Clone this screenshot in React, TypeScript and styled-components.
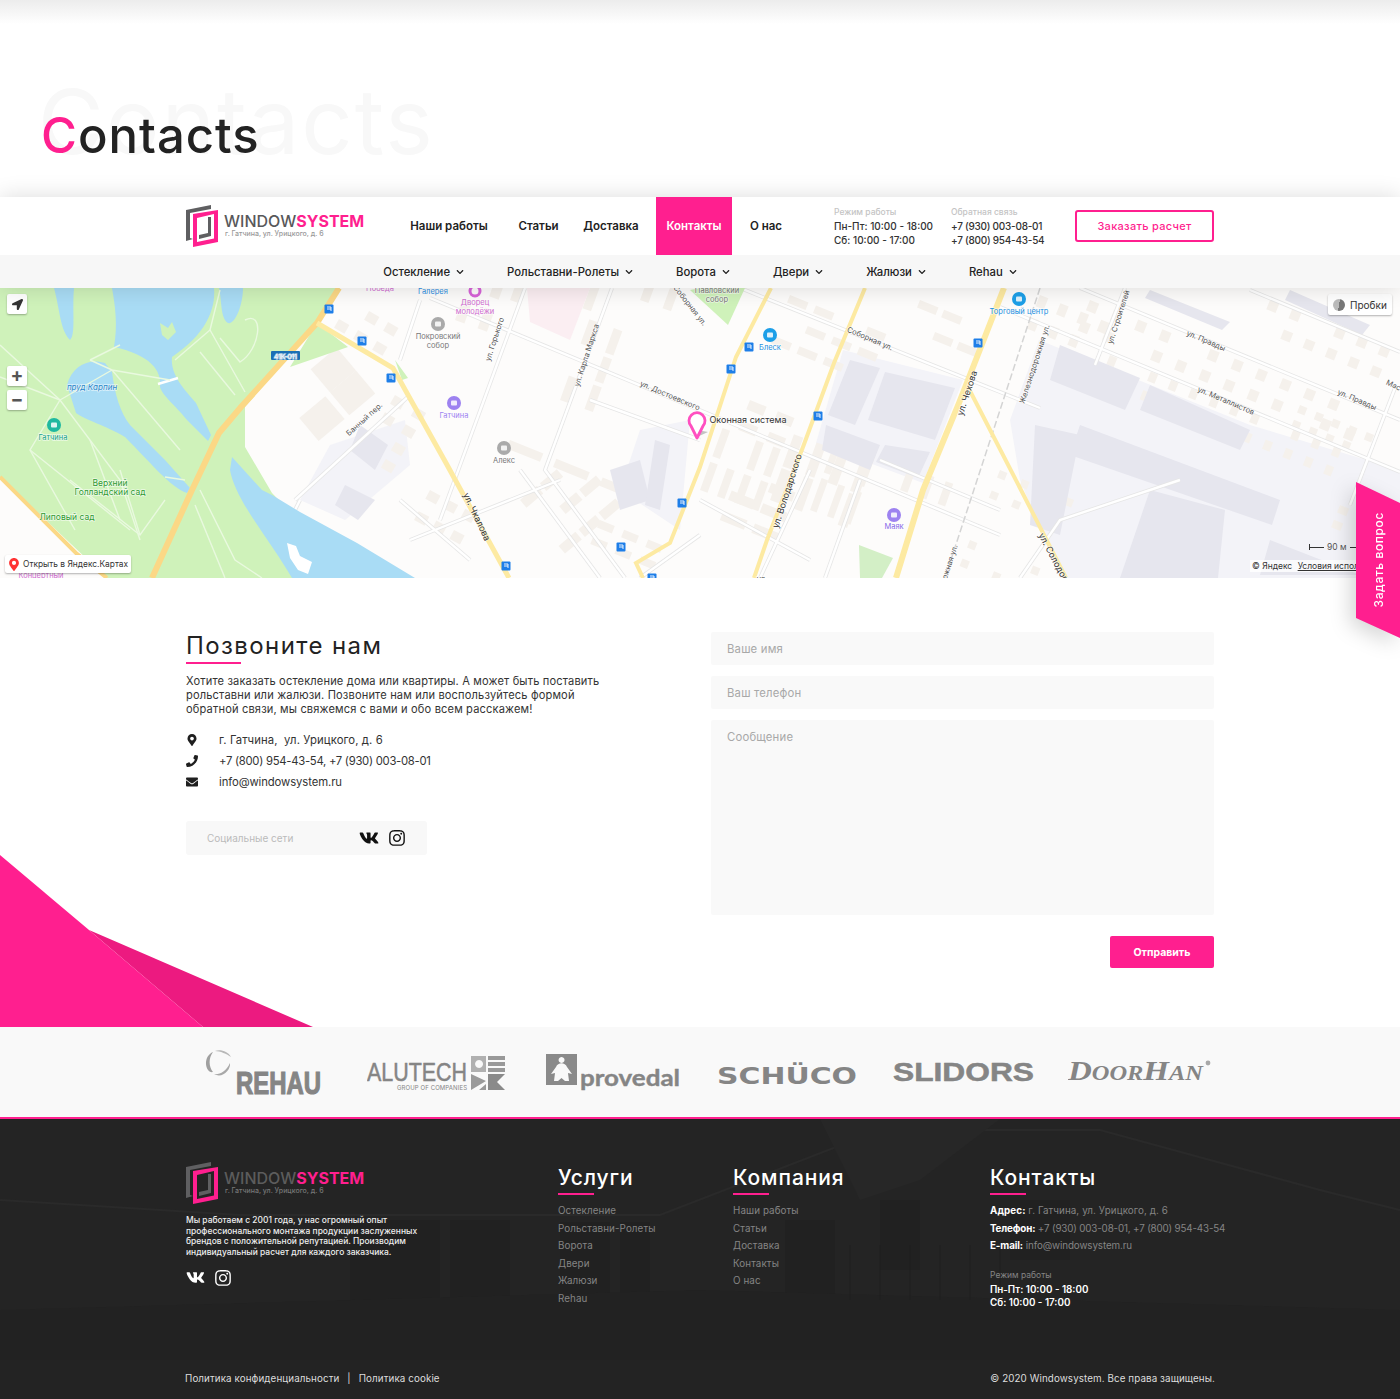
import React from 'react';
import styled, { createGlobalStyle } from 'styled-components';
import { FaVk, FaInstagram, FaMapMarkerAlt, FaPhoneAlt, FaEnvelope, FaChevronDown, FaLocationArrow } from 'react-icons/fa';

const pink = '#ff1f8f';
const font = '"Inter", "Noto Sans", sans-serif';

const Global = createGlobalStyle`
    html, body { margin: 0; padding: 0; background: #fff; }
    body { font-family: ${font}; color: #222; }
    * { box-sizing: border-box; }
`;

const Page = styled.div`
    position: relative;
    width: 1400px;
    height: 1399px;
    overflow: hidden;
`;

/* ---------- hero ---------- */
const Hero = styled.section`
    position: relative;
    height: 197px;
    padding: 106px 0 0 41px;
    background: linear-gradient(#ececec, #fff 24px);
`;
const GhostTitle = styled.div`
    position: absolute;
    left: 38px;
    top: 72px;
    font-size: 90px;
    line-height: 100px;
    letter-spacing: 2px;
    color: #f8f8f8;
`;
const Title = styled.h1`
    position: relative;
    margin: 0;
    font-size: 49px;
    line-height: 60px;
    font-weight: 500;
    letter-spacing: 1px;
    color: #222;
    span { color: ${pink}; }
`;

/* ---------- header ---------- */
const Header = styled.header`
    position: relative;
    z-index: 2;
    box-shadow: 0 0 22px rgba(0, 0, 0, .14);
`;
const TopBar = styled.div`
    height: 58px;
    background: #fff;
    padding-left: 185px;
    display: flex;
    align-items: stretch;
`;
const LogoBox = styled.div<{ $w: number }>`
    display: flex;
    align-items: center;
    gap: 4px;
    width: ${p => p.$w}px;
`;
const LogoText = styled.div`
    display: flex;
    flex-direction: column;
    margin-top: -2px;
`;
const LogoName = styled.div<{ $dark?: boolean }>`
    font-size: 16px;
    line-height: 18px;
    font-weight: 500;
    white-space: nowrap;
    color: ${p => (p.$dark ? '#5c5c5c' : '#58585a')};
    b { font-weight: 700; color: ${pink}; }
`;
const LogoSub = styled.div<{ $dark?: boolean }>`
    font-size: 7px;
    line-height: 8px;
    margin-left: 1px;
    font-weight: 500;
    white-space: nowrap;
    color: ${p => (p.$dark ? '#777' : '#999')};
`;
const NavItem = styled.a<{ $w: number; $ml?: number; $active?: boolean }>`
    width: ${p => p.$w}px;
    margin-left: ${p => p.$ml ?? 0}px;
    display: flex;
    align-items: center;
    justify-content: center;
    font-size: 11.5px;
    font-weight: 600;
    white-space: nowrap;
    color: ${p => (p.$active ? '#fff' : '#222')};
    background: ${p => (p.$active ? pink : 'transparent')};
`;
const InfoCol = styled.div<{ $w: number; $ml?: number; $ls?: number }>`
    width: ${p => p.$w}px;
    margin-left: ${p => p.$ml ?? 0}px;
    padding-top: 10px;
    font-size: 10px;
    line-height: 13.5px;
    font-weight: 500;
    letter-spacing: ${p => p.$ls ?? 0}px;
    white-space: nowrap;
    color: #333;
`;
const InfoHint = styled.div`
    font-size: 8.5px;
    line-height: 10px;
    margin-bottom: 3px;
    letter-spacing: 0;
    color: #c4c4c4;
`;
const OrderButton = styled.a`
    width: 139px;
    height: 32px;
    margin-top: 13px;
    display: flex;
    align-items: center;
    justify-content: center;
    border: 2px solid ${pink};
    border-radius: 3px;
    font-size: 11px;
    font-weight: 500;
    letter-spacing: .3px;
    color: ${pink};
`;
const SubBar = styled.nav`
    height: 33px;
    background: #f7f7f7;
    display: flex;
    align-items: center;
    justify-content: center;
    gap: 43px;
    font-size: 11.3px;
    font-weight: 500;
    color: #222;
`;
const SubItem = styled.a`
    display: flex;
    align-items: center;
    gap: 6px;
    white-space: nowrap;
    svg { width: 8px; height: 8px; }
`;

/* ---------- map ---------- */
const MapWrap = styled.section`
    position: relative;
    height: 290px;
    overflow: hidden;
    background: #fdfcfb;
    svg.map { display: block; }
`;
const MapText = styled.text<{ $c?: string; $s?: number; $i?: boolean }>`
    font-family: ${font};
    font-size: ${p => p.$s ?? 8}px;
    font-style: ${p => (p.$i ? 'italic' : 'normal')};
    fill: ${p => p.$c ?? '#555'};
    text-anchor: middle;
    paint-order: stroke;
    stroke: rgba(255, 255, 255, .6);
    stroke-width: 1.5px;
`;
const MapButton = styled.div<{ $top: number }>`
    position: absolute;
    left: 7px;
    top: ${p => p.$top}px;
    width: 20px;
    height: 20px;
    background: #fff;
    border-radius: 2px;
    box-shadow: 0 1px 2px rgba(0, 0, 0, .3);
    display: flex;
    align-items: center;
    justify-content: center;
    font-size: 19px;
    font-weight: 700;
    line-height: 20px;
    color: #555;
    svg { width: 11px; height: 11px; color: #333; }
`;
const TrafficButton = styled.div`
    position: absolute;
    right: 8px;
    top: 6px;
    width: 64px;
    height: 21px;
    padding-left: 5px;
    background: #fff;
    border-radius: 2px;
    box-shadow: 0 1px 2px rgba(0, 0, 0, .3);
    display: flex;
    align-items: center;
    gap: 5px;
    font-size: 10px;
    color: #333;
    i { width: 12px; height: 12px; border-radius: 50%; background: linear-gradient(100deg, #bbb 50%, #777 50%); }
`;
const OpenMaps = styled.div`
    position: absolute;
    left: 5px;
    top: 267px;
    width: 126px;
    height: 18px;
    padding-left: 3px;
    background: #fff;
    border-radius: 2px;
    box-shadow: 0 1px 2px rgba(0, 0, 0, .3);
    display: flex;
    align-items: center;
    gap: 3px;
    font-size: 8.4px;
    white-space: nowrap;
    color: #333;
    svg { width: 12px; height: 13px; color: #f33; }
`;
const MapCopy = styled.div`
    position: absolute;
    left: 1250px;
    top: 272px;
    padding: 0 2px;
    font-size: 8.5px;
    line-height: 12px;
    white-space: nowrap;
    background: rgba(255, 255, 255, .8);
    color: #333;
    u { margin-left: 3px; }
`;
const MapScale = styled.div`
    position: absolute;
    left: 1309px;
    top: 253px;
    display: flex;
    align-items: center;
    gap: 3px;
    font-size: 8.5px;
    line-height: 12px;
    color: #555;
    &::before { content: ''; width: 14px; height: 6px; border-left: 1px solid #333; background: linear-gradient(#333, #333) center / 100% 1px no-repeat; }
    &::after { content: ''; width: 10px; height: 1px; background: #333; }
`;

/* ---------- side tab ---------- */
const AskShadow = styled.div`
    position: absolute;
    right: 0;
    top: 482px;
    z-index: 3;
    filter: drop-shadow(-6px 6px 10px rgba(0, 0, 0, .16));
`;
const AskTab = styled.a`
    width: 44px;
    height: 156px;
    background: ${pink};
    clip-path: polygon(0 0, 100% 21px, 100% 100%, 0 136px);
    display: flex;
    align-items: center;
    justify-content: center;
    span {
        writing-mode: vertical-rl;
        transform: rotate(180deg);
        font-size: 12px;
        font-weight: 500;
        letter-spacing: .6px;
        color: #fff;
        white-space: nowrap;
    }
`;

/* ---------- contact block ---------- */
const Main = styled.section`
    position: relative;
    height: 449px;
    padding: 54px 186px 0;
    display: flex;
`;
const Corner = styled.svg`
    position: absolute;
    left: 0;
    bottom: 0;
`;
const Left = styled.div`
    width: 525px;
`;
const Heading = styled.h2`
    margin: 0;
    font-size: 24px;
    line-height: 28px;
    font-weight: 400;
    letter-spacing: 1.4px;
    color: #222;
    &::after {
        content: '';
        display: block;
        width: 55px;
        height: 2px;
        margin-top: 2px;
        background: ${pink};
    }
`;
const Lead = styled.p`
    margin: 10px 0 0;
    width: 430px;
    font-size: 11.1px;
    line-height: 14px;
    letter-spacing: .15px;
    color: #333;
`;
const ContactList = styled.ul`
    list-style: none;
    margin: 13px 0 0;
    padding: 0;
`;
const ContactRow = styled.li<{ $ls?: number }>`
    height: 21px;
    display: flex;
    align-items: center;
    font-size: 11.3px;
    letter-spacing: ${p => p.$ls ?? 0.1}px;
    color: #333;
    svg { width: 12px; height: 12px; margin-right: 21px; color: #1f1f1f; }
`;
const PhoneIcon = styled(FaPhoneAlt)`
    transform: scaleX(-1);
`;
const SocialBar = styled.div`
    width: 241px;
    height: 34px;
    margin-top: 29px;
    padding: 0 21px 0 21px;
    display: flex;
    align-items: center;
    background: #f8f8f8;
    border-radius: 3px;
    font-size: 10px;
    color: #bbb;
`;
const SocialLabel = styled.span`
    flex: 1;
`;
const SocialIcon = styled.span`
    display: inline-flex;
    margin-right: 9px;
    color: #111;
    &:last-child { margin-right: 0; }
`;
const Form = styled.form`
    width: 503px;
    display: flex;
    flex-direction: column;
    gap: 11px;
    position: relative;
`;
const Field = styled.div<{ $h: number }>`
    height: ${p => p.$h}px;
    padding: 10px 16px;
    font-size: 11.3px;
    line-height: 14px;
    letter-spacing: .2px;
    background: #f9f9f9;
    border-radius: 2px;
    color: #a8a8a8;
`;
const Send = styled.a`
    align-self: flex-end;
    width: 104px;
    height: 32px;
    margin-top: 10px;
    background: ${pink};
    border-radius: 2px;
    display: flex;
    align-items: center;
    justify-content: center;
    font-size: 10.5px;
    font-weight: 700;
    color: #fff;
`;

/* ---------- brands ---------- */
const Brands = styled.section`
    height: 90px;
    padding-left: 205px;
    background: #f9f9f9;
    display: flex;
    align-items: flex-start;
`;
const Brand = styled.svg<{ $ml: number; $mt: number }>`
    display: block;
    flex: none;
    margin: ${p => p.$mt}px 0 0 ${p => p.$ml}px;
`;
const BrandText = styled.text<{ $f?: string; $w?: number; $s: number; $i?: boolean; $heavy?: number }>`
    font-family: ${p => p.$f ?? font};
    font-weight: ${p => p.$w ?? 700};
    font-size: ${p => p.$s}px;
    font-style: ${p => (p.$i ? 'italic' : 'normal')};
    fill: #858585;
    stroke: #858585;
    stroke-width: ${p => p.$heavy ?? 0}px;
`;

/* ---------- footer ---------- */
const Footer = styled.footer`
    position: relative;
    height: 282px;
    border-top: 2px solid ${pink};
    background: #242424;
    overflow: hidden;
`;
const FooterArt = styled.svg`
    position: absolute;
    left: 0;
    top: 0;
`;
const FooterBody = styled.div`
    position: relative;
    height: 240px;
    padding: 42px 0 0 185px;
    display: flex;
`;
const FooterCol = styled.div<{ $w: number }>`
    width: ${p => p.$w}px;
`;
const FooterAbout = styled.p`
    margin: 10px 0 0 1px;
    width: 240px;
    font-size: 8.45px;
    line-height: 10.6px;
    font-weight: 500;
    color: #eee;
`;
const FooterSocial = styled.div`
    display: flex;
    align-items: center;
    gap: 9px;
    margin: 11px 0 0 1px;
    color: #fff;
`;
const FooterTitle = styled.h3`
    margin: 4px 0 0;
    font-size: 21px;
    line-height: 26px;
    font-weight: 500;
    letter-spacing: .9px;
    color: #fff;
    &::after {
        content: '';
        display: block;
        width: 36px;
        height: 2px;
        margin-top: 2px;
        background: ${pink};
    }
`;
const FooterLinks = styled.div`
    margin-top: 7px;
`;
const FooterLink = styled.div<{ $ls?: number }>`
    height: 17.5px;
    font-size: 9.8px;
    line-height: 17.5px;
    letter-spacing: ${p => p.$ls ?? 0.1}px;
    white-space: nowrap;
    color: #858585;
    b { font-weight: 700; color: #fff; }
`;
const HoursHint = styled.div`
    margin-top: 15px;
    font-size: 8.5px;
    line-height: 11px;
    color: #858585;
`;
const Hours = styled.div`
    margin-top: 2px;
    font-size: 9.8px;
    line-height: 13px;
    font-weight: 600;
    color: #fff;
`;
const FooterBottom = styled.div`
    position: relative;
    height: 40px;
    padding: 13px 185px 0;
    display: flex;
    justify-content: space-between;
    font-size: 9.8px;
    line-height: 14px;
    color: #ddd;
    letter-spacing: .1px;
    i { font-style: normal; margin: 0 8px; }
`;

/* ---------- drawings ---------- */
type BoxGrid = [number, number, number, number, number, number, number, number, number];

// x, y, angle, cols, rows, stepX, stepY, w, h
const tanGrids: BoxGrid[] = [
    [1090, 300, 22, 12, 2, 26, 22, 10, 11],
    [1110, 355, 22, 12, 2, 22, 20, 8, 10],
    [1040, 295, 22, 4, 2, 22, 24, 9, 12],
    [1270, 300, 22, 6, 2, 24, 22, 10, 10],
    [1300, 405, 22, 5, 2, 18, 16, 8, 8],
    [640, 300, -70, 3, 2, 34, 24, 28, 9],
    [560, 300, -70, 2, 2, 44, 24, 38, 9],
    [510, 300, -70, 4, 2, 34, 20, 26, 9],
    [455, 320, -70, 4, 2, 34, 24, 22, 10],
    [510, 440, 22, 3, 1, 50, 20, 36, 9],
    [520, 500, -40, 3, 3, 26, 30, 22, 10],
    [430, 490, 28, 3, 2, 20, 24, 12, 10],
    [700, 490, -70, 2, 4, 36, 18, 30, 8],
    [740, 470, 22, 2, 3, 34, 22, 26, 10],
    [770, 500, -70, 2, 4, 36, 24, 34, 10],
    [970, 540, 22, 3, 2, 34, 20, 8, 8],
    [1000, 470, 22, 4, 2, 24, 22, 8, 8],
    [790, 295, 22, 4, 3, 28, 22, 20, 8],
    [750, 400, 22, 2, 2, 30, 22, 18, 10],
    [1340, 505, 22, 3, 2, 20, 16, 10, 8],
    [350, 300, 30, 3, 2, 22, 22, 12, 10],
    [395, 395, 30, 2, 4, 24, 20, 12, 10],
    [560, 400, -70, 3, 2, 30, 26, 26, 9],
    [600, 520, 22, 3, 2, 26, 18, 16, 8],
    [920, 300, 22, 3, 2, 26, 24, 20, 8],
    [900, 490, -70, 1, 3, 30, 20, 24, 8],
    [810, 510, -70, 2, 3, 40, 18, 34, 7],
    [280, 395, -40, 2, 2, 40, 30, 34, 30]
];

const grey = [
    'M843 350 L963 380 L923 483 L816 443 Z',
    'M1039 340 L1250 425 L1400 470 V578 H1060 L1020 480 L1010 420 Z',
    'M330 445 L405 420 L410 465 L345 520 L300 500 Z',
    'M640 430 L690 420 L680 530 L620 490 Z'
];
const greyDark = [
    'M850 360 L880 368 L855 425 L828 415 Z',
    'M885 372 L955 388 L935 440 L868 420 Z',
    'M826 425 L880 445 L870 470 L822 450 Z',
    'M885 445 L930 452 L918 478 L876 462 Z',
    'M1060 345 L1140 378 L1125 410 L1050 380 Z',
    'M1150 385 L1250 430 L1240 450 L1140 410 Z',
    'M1080 425 L1280 500 L1272 525 L1070 455 Z',
    'M1035 425 L1080 435 L1060 535 L1030 525 Z',
    'M1150 490 L1225 510 L1218 578 H1120 Z',
    'M1270 540 L1360 575 H1260 Z',
    'M360 425 L388 445 L375 470 L350 450 Z',
    'M345 485 L375 500 L358 520 L335 505 Z',
    'M610 470 L640 460 L650 500 L620 510 Z',
    'M655 440 L670 445 L660 510 L645 505 Z',
    'M1150 290 L1230 322 L1222 330 L1145 298 Z',
    'M1290 290 L1370 325 L1362 335 L1285 300 Z'
];
const streets = [
    'M430 298 L1000 535', 'M740 288 L1040 408', 'M1080 288 L1400 420', 'M1000 307 L1400 472',
    'M1250 290 L1400 352', 'M525 288 L440 520', 'M612 288 L545 470 L625 578', 'M410 395 L295 500',
    'M1125 288 L1095 365', 'M1395 388 L1350 505', 'M590 400 L700 440', 'M410 540 L560 480',
    'M520 470 L600 578', 'M300 500 L270 560', 'M1020 578 L1060 520 L1180 480', 'M700 500 L810 560',
    'M880 460 L1000 510', 'M640 578 L700 535', 'M810 470 L760 578', 'M860 480 L825 578',
    'M420 300 L400 360', 'M400 500 L470 560'
];
const parkPaths = [
    'M0 345 L60 400 L120 480 L140 540', 'M60 400 L30 450 L75 530', 'M60 400 L112 370', 'M90 360 L112 370 L170 380',
    'M112 370 L180 450', 'M30 450 L130 530', 'M70 480 L140 535 L165 500', 'M90 440 L120 520', 'M120 470 L140 535',
    'M220 290 L210 330 L245 392', 'M210 330 L175 360', 'M200 352 L235 395', 'M245 320 C265 310 260 350 240 362 L220 338',
    'M200 490 L235 560 L262 578', 'M195 505 L225 578', 'M0 377 L60 400', 'M165 477 L185 480', 'M120 345 L90 360'
];
const busStops: [number, number][] = [
    [329, 309], [362, 341], [391, 378], [506, 566], [621, 547], [682, 503], [652, 578],
    [749, 347], [731, 369], [818, 416], [978, 343]
];

const MapLabel = ({ x, y, r, children, c, s, i }: { x: number; y: number; r?: number; children: string; c?: string; s?: number; i?: boolean }) => (
    <MapText x={x} y={y} $c={c} $s={s} $i={i} transform={r ? `rotate(${r} ${x} ${y})` : undefined}>{children}</MapText>
);

const Poi = ({ x, y, c }: { x: number; y: number; c: string }) => (
    <g>
        <circle cx={x} cy={y} r={7} fill={c} />
        <rect x={x - 3} y={y - 2.5} width={6} height={5} rx={1} fill="#fff" opacity=".85" />
    </g>
);

const CityMap = () => {
    const boxes: React.ReactElement[] = [];
    tanGrids.forEach(([x, y, a, cols, rows, sx, sy, w, h], g) => {
        for (let r = 0; r < rows; r++) {
            for (let c = 0; c < cols; c++) {
                if ((r * 3 + c * 5 + g) % 7 === 6) continue;
                boxes.push(
                    <rect key={`${g}-${r}-${c}`} x={c * sx} y={r * sy} width={w} height={h}
                        fill="#f5f1ec" transform={`translate(${x} ${y}) rotate(${a})`} />
                );
            }
        }
    });
    return (
        <svg className="map" width="1400" height="290" viewBox="0 288 1400 290">
            <rect x="0" y="288" width="1400" height="290" fill="#fdfcfb" />
            {grey.map((d, i) => <path key={i} d={d} fill="#f3f3f8" />)}
            {boxes}
            {greyDark.map((d, i) => <path key={i} d={d} fill="#e6e6ee" />)}
            <path d="M527 288 H590 L570 340 L530 322 Z" fill="#fbeef2" />
            {streets.map((d, i) => <path key={i} d={d} fill="none" stroke="#e6e6e6" strokeWidth="4" />)}
            {streets.map((d, i) => <path key={i} d={d} fill="none" stroke="#fff" strokeWidth="2.4" />)}

            <path d="M0 288 H340 L317 323 L245 407 V447 L272 493 L298 520 L345 578 H152 L107 578 L0 477 Z" fill="#cff2ba" />
            <path d="M317 323 L348 347 L290 367 Z M395 360 L408 378 L402 380 Z" fill="#cff2ba" />
            <path d="M700 288 H745 L728 325 L690 290 Z" fill="#cff2ba" />
            <path d="M859 545 L893 558 L882 578 H860 Z" fill="#d3efc6" />
            <path d="M112 288 H214 C216 310 205 335 172 357 C170 375 185 390 196 403 L211 435 L208 441 L187 420 C175 405 162 395 160 387 C162 370 150 355 114 347 C118 325 115 305 112 288 Z" fill="#a9dcf5" />
            <path d="M67 385 C72 365 90 358 105 363 L112 372 C115 395 120 412 130 425 L165 460 L190 488 L187 493 C170 487 150 462 125 437 C105 425 85 420 76 413 Z" fill="#a9dcf5" />
            <path d="M54 288 H74 C72 310 76 335 70 340 C60 330 60 310 54 288 Z M219 288 H243 C243 305 235 325 228 323 C220 318 222 300 219 288 Z" fill="#a9dcf5" />
            <path d="M232 457 L262 490 L272 495 L300 512 L357 543 L415 578 H292 C270 540 235 500 230 470 Z" fill="#a9dcf5" />
            <path d="M160 323 L168 328 L172 322 L176 332 L168 340 L162 335 Z" fill="#cff2ba" />
            <path d="M287 543 L296 546 L300 556 L312 562 L308 574 L298 570 L290 558 Z" fill="#fff" />
            <path d="M158 384 L178 378" stroke="#fff" strokeWidth="2.5" />
            {parkPaths.map((d, i) => <path key={i} d={d} fill="none" stroke="#e9f9df" strokeWidth="1.4" />)}

            <path d="M1040 288 L945 578" fill="none" stroke="#d4d4d4" strokeWidth="1.5" strokeDasharray="7 3" />
            <path d="M0 477 L76 553 L107 578" fill="none" stroke="#fbd886" strokeWidth="4" />
            <path d="M339 288 L317 323 L241 407 L219 433 L192 490 L152 578" fill="none" stroke="#fbd886" strokeWidth="6" />
            <path d="M317 323 L393 368 L446 463 L509 578" fill="none" stroke="#fdeaa2" strokeWidth="5" />
            <path d="M771 288 L736 357 L700 467 L670 543 L636 563 L643 578" fill="none" stroke="#fdeaa2" strokeWidth="4" />
            <path d="M865 288 L834 363 L803 447 L767 540 L754 578" fill="none" stroke="#fdeaa2" strokeWidth="4" />
            <path d="M1004 288 L959 403 L923 490 L896 578" fill="none" stroke="#fdeaa2" strokeWidth="6" />
            <path d="M968 387 L1021 490 L1066 578" fill="none" stroke="#fdeaa2" strokeWidth="4" />

            <rect x="271" y="351" width="29" height="9" rx="1" fill="#1b6fb5" />
            <MapLabel x={285.5} y={358.5} s={6.5} c="#fff">41К-011</MapLabel>
            {busStops.map(([x, y]) => (
                <g key={`${x}-${y}`}>
                    <rect x={x - 4.5} y={y - 4.5} width={9} height={9} rx={1} fill="#1e7ee8" />
                    <path d={`M${x - 2} ${y - 2} H${x + 2} V${y + 2} M${x - 2} ${y} H${x + 2}`} fill="none" stroke="#fff" strokeWidth=".9" />
                </g>
            ))}

            <Poi x={438} y={324} c="#aaa" />
            <Poi x={504} y={448} c="#aaa" />
            <Poi x={454} y={403} c="#9d82f0" />
            <Poi x={54} y={425} c="#1fb8a0" />
            <Poi x={894} y={515} c="#9d82f0" />
            <Poi x={770} y={335} c="#1c9fe8" />
            <Poi x={1019} y={299} c="#1c9fe8" />
            <circle cx={475} cy={291} r={5} fill="none" stroke="#d764d8" strokeWidth="3" />

            <MapLabel x={380} y={291} c="#cf6ccf" s={7.5}>Победа</MapLabel>
            <MapLabel x={433} y={294} c="#2f8fe0" s={7.5}>Галерея</MapLabel>
            <MapLabel x={475} y={305} c="#cf6ccf" s={7.5}>Дворец</MapLabel>
            <MapLabel x={475} y={314} c="#cf6ccf" s={7.5}>молодёжи</MapLabel>
            <MapLabel x={438} y={339} s={7.5} c="#777">Покровский</MapLabel>
            <MapLabel x={438} y={348} s={7.5} c="#777">собор</MapLabel>
            <MapLabel x={717} y={293} s={7.5} c="#777">Павловский</MapLabel>
            <MapLabel x={717} y={302} s={7.5} c="#777">собор</MapLabel>
            <MapLabel x={454} y={418} s={7.5} c="#9d82f0">Гатчина</MapLabel>
            <MapLabel x={504} y={463} s={7.5} c="#777">Алекс</MapLabel>
            <MapLabel x={53} y={440} s={7.5} c="#14a08a">Гатчина</MapLabel>
            <MapLabel x={894} y={529} s={7.5} c="#8468e8">Маяк</MapLabel>
            <MapLabel x={770} y={350} s={7.5} c="#1c90e0">Блеск</MapLabel>
            <MapLabel x={1019} y={314} s={7.5} c="#1c90e0">Торговый центр</MapLabel>
            <MapLabel x={92} y={390} s={8} c="#2a86c8" i>пруд Карпин</MapLabel>
            <MapLabel x={110} y={486} s={8.5} c="#2f9a32">Верхний</MapLabel>
            <MapLabel x={110} y={495} s={8.5} c="#2f9a32">Голландский сад</MapLabel>
            <MapLabel x={67} y={520} s={8.5} c="#2f9a32">Липовый сад</MapLabel>
            <MapLabel x={41} y={578} s={7.5} c="#cf6ccf">Концертный</MapLabel>

            <MapLabel x={497} y={340} r={-72} s={7.5}>ул. Горького</MapLabel>
            <MapLabel x={589} y={356} r={-72} s={7.5}>ул. Карла Маркса</MapLabel>
            <MapLabel x={669} y={398} r={23} s={7.5}>ул. Достоевского</MapLabel>
            <MapLabel x={869} y={341} r={23} s={7.5}>Соборная ул.</MapLabel>
            <MapLabel x={688} y={307} r={52} s={7.5}>Соборная ул.</MapLabel>
            <MapLabel x={970} y={394} r={-72} s={9} c="#333">ул. Чехова</MapLabel>
            <MapLabel x={790} y={492} r={-72} s={9} c="#333">ул. Володарского</MapLabel>
            <MapLabel x={474} y={518} r={65} s={9} c="#333">ул. Чкалова</MapLabel>
            <MapLabel x={366} y={421} r={-42} s={7.5}>Банный пер.</MapLabel>
            <MapLabel x={1037} y={365} r={-72} s={7.5}>Железнодорожная ул.</MapLabel>
            <MapLabel x={945} y={585} r={-72} s={7.5}>Железнодорожная ул.</MapLabel>
            <MapLabel x={1121} y={318} r={-72} s={7.5}>ул. Строителей</MapLabel>
            <MapLabel x={1205} y={343} r={23} s={7.5}>ул. Правды</MapLabel>
            <MapLabel x={1356} y={402} r={23} s={7.5}>ул. Правды</MapLabel>
            <MapLabel x={1225} y={403} r={23} s={7.5}>ул. Металлистов</MapLabel>
            <MapLabel x={1400} y={391} r={25} s={7.5}>Мастера</MapLabel>
            <MapLabel x={1052} y={561} r={62} s={9} c="#333">ул. Солодова</MapLabel>
            <MapLabel x={762} y={582} s={7.5}>ул.</MapLabel>

            <path d="M697 437 L692 429 L708 432 Z" fill="#aaa" opacity=".7" />
            <path d="M697 438 L691 426 A8 8 0 1 1 703 426 Z" fill="#fff" stroke="#ff4fc0" strokeWidth="2.8" strokeLinejoin="round" />
            <circle cx="697" cy="420" r="4" fill="#fff" />
            <MapLabel x={748} y={423} s={9} c="#333">Оконная система</MapLabel>
        </svg>
    );
};

const LogoMark = () => (
    <svg width="35" height="44" viewBox="0 0 35 44">
        <path d="M1 6 L26 1 V5 L5 9 V34 L8 35 L1 37 Z" fill="#5f5f61" />
        <path d="M23 13 H26 V32 L14 35 V31 L23 29 Z" fill="#5f5f61" />
        <path fillRule="evenodd" clipRule="evenodd" d="M8 10 L33 6 V38 L8 43 Z M12 14 V38 L29 34.5 V10 Z" fill={pink} />
    </svg>
);

const Logo = ({ dark, w }: { dark?: boolean; w: number }) => (
    <LogoBox $w={w}>
        <LogoMark />
        <LogoText>
            <LogoName $dark={dark}>WINDOW<b>SYSTEM</b></LogoName>
            <LogoSub $dark={dark}>г. Гатчина, ул. Урицкого, д. 6</LogoSub>
        </LogoText>
    </LogoBox>
);

const FooterHouse = () => (
    <FooterArt width="1400" height="280" viewBox="0 1119 1400 280">
        <g fill="#212121">
            <rect x="350" y="1220" width="90" height="95" />
            <rect x="450" y="1220" width="60" height="90" />
            <rect x="560" y="1222" width="50" height="90" />
            <rect x="620" y="1222" width="30" height="90" />
            <rect x="880" y="1200" width="40" height="70" />
            <rect x="785" y="1220" width="50" height="100" />
            <rect x="1010" y="1200" width="60" height="60" />
        </g>
        <path d="M0 1200 L240 1215 H660 L880 1130 H1100 L1320 1190 L1400 1210" fill="none" stroke="#2a2a2a" strokeWidth="2" />
        <path d="M820 1119 L1000 1119 L920 1180 L860 1200 Z" fill="#272727" />
        <path d="M0 1310 L700 1290 L1400 1310 V1360 H0 Z" fill="#222" />
        <rect x="0" y="1360" width="1400" height="39" fill="#232323" />
        <path d="M850 1300 V1245 M880 1300 V1245 M910 1300 V1245 M940 1300 V1245 M970 1300 V1245 M1000 1300 V1245" stroke="#1f1f1f" strokeWidth="1" />
    </FooterArt>
);

const services = ['Остекление', 'Рольставни-Ролеты', 'Ворота', 'Двери', 'Жалюзи', 'Rehau'];
const company = ['Наши работы', 'Статьи', 'Доставка', 'Контакты', 'О нас'];
const narrow = '"Liberation Sans Narrow", "Liberation Sans", sans-serif';

export default function App() {
    return (
        <Page>
            <Global />
            <Hero>
                <GhostTitle>Contacts</GhostTitle>
                <Title><span>C</span>ontacts</Title>
            </Hero>
            <Header>
                <TopBar>
                    <Logo w={205} />
                    <NavItem $w={118}>Наши работы</NavItem>
                    <NavItem $w={61}>Статьи</NavItem>
                    <NavItem $w={84}>Доставка</NavItem>
                    <NavItem $w={76} $ml={3} $active>Контакты</NavItem>
                    <NavItem $w={68}>О нас</NavItem>
                    <InfoCol $w={117} $ml={34}>
                        <InfoHint>Режим работы</InfoHint>
                        Пн-Пт: 10:00 - 18:00<br />Сб: 10:00 - 17:00
                    </InfoCol>
                    <InfoCol $w={124} $ls={-0.25}>
                        <InfoHint>Обратная связь</InfoHint>
                        +7 (930) 003-08-01<br />+7 (800) 954-43-54
                    </InfoCol>
                    <OrderButton>Заказать расчет</OrderButton>
                </TopBar>
                <SubBar>
                    {services.map(t => (
                        <SubItem key={t}>{t} <FaChevronDown /></SubItem>
                    ))}
                </SubBar>
            </Header>
            <MapWrap>
                <CityMap />
                <MapButton $top={6}><FaLocationArrow /></MapButton>
                <MapButton $top={78}>+</MapButton>
                <MapButton $top={102}>−</MapButton>
                <TrafficButton><i />Пробки</TrafficButton>
                <OpenMaps><FaMapMarkerAlt />Открыть в Яндекс.Картах</OpenMaps>
                <MapScale>90 м</MapScale>
                <MapCopy>© Яндекс <u>Условия использования</u></MapCopy>
            </MapWrap>
            <AskShadow>
                <AskTab><span>Задать вопрос</span></AskTab>
            </AskShadow>
            <Main>
                <Corner width="314" height="172" viewBox="0 855 314 172">
                    <path d="M89 930 L313 1027 H203 Z" fill="#ec1a80" />
                    <path d="M0 855 L89 930 L203 1027 H0 Z" fill={pink} />
                </Corner>
                <Left>
                    <Heading>Позвоните нам</Heading>
                    <Lead>
                        Хотите заказать остекление дома или квартиры. А может быть поставить рольставни или жалюзи. Позвоните нам или воспользуйтесь формой обратной связи, мы свяжемся с вами и обо всем расскажем!
                    </Lead>
                    <ContactList>
                        <ContactRow><FaMapMarkerAlt />г. Гатчина,&nbsp; ул. Урицкого, д. 6</ContactRow>
                        <ContactRow $ls={-0.28}><PhoneIcon />+7 (800) 954-43-54, +7 (930) 003-08-01</ContactRow>
                        <ContactRow $ls={-0.1}><FaEnvelope />info@windowsystem.ru</ContactRow>
                    </ContactList>
                    <SocialBar>
                        <SocialLabel>Социальные сети</SocialLabel>
                        <SocialIcon><FaVk size={20} /></SocialIcon>
                        <SocialIcon><FaInstagram size={18} /></SocialIcon>
                    </SocialBar>
                </Left>
                <Form>
                    <Field $h={33}>Ваше имя</Field>
                    <Field $h={33}>Ваш телефон</Field>
                    <Field $h={195}>Сообщение</Field>
                    <Send>Отправить</Send>
                </Form>
            </Main>
            <Brands>
                <Brand $ml={0} $mt={23} width="117" height="50" viewBox="0 0 117 50">
                    <path d="M8 2 C1 5 -1 14 3 20 C5 23 8 22 8 22 C4 17 3 9 8 2 Z" fill="#a0a0a0" />
                    <path d="M10 1 C15 -1 23 1 26 7 C22 4 15 1 10 1 Z" fill="#b8b8b8" />
                    <path d="M9 24 C14 25 21 22 25 13 C26 20 17 29 9 24 Z" fill="#a8a8a8" />
                    <BrandText x="31" y="44" $s={32} $f={narrow} $heavy={1.2} textLength="85" lengthAdjust="spacingAndGlyphs">REHAU</BrandText>
                </Brand>
                <Brand $ml={45} $mt={29} width="138" height="50" viewBox="0 0 138 50">
                    <BrandText x="0" y="25" $s={25} $w={400} $f={narrow} $heavy={.5} textLength="100" lengthAdjust="spacingAndGlyphs">ALUTECH</BrandText>
                    <BrandText x="30" y="34" $s={6} $w={400} textLength="70">GROUP OF COMPANIES</BrandText>
                    <path fillRule="evenodd" d="M104 0 H119 V16 H104 Z M112 4 A4 4 0 1 0 112.1 4 Z" fill="#b0b0b0" />
                    <path d="M121 0 H138 V4 H121 Z M121 6 H138 V10 H121 Z M121 12 H138 V16 H121 Z" fill="#999" />
                    <path d="M104 18 L119 25 L104 34 Z M112 34 L119 28 V34 Z" fill="#9a9a9a" />
                    <path d="M121 18 H138 L130 26 L138 34 H121 Z" fill="#8a8a8a" />
                </Brand>
                <Brand $ml={41} $mt={27} width="134" height="50" viewBox="0 0 134 50">
                    <path fillRule="evenodd" d="M0 0 H31 V31 H0 Z M15.5 3 A3 3 0 1 0 15.6 3 Z M10 13 C12 8 19 8 21 13 L26 20 L22 19 L23 27 H19 L15.5 24 L12 27 H8 L9 19 L5 20 Z" fill="#8a8a8a" />
                    <BrandText x="34" y="32" $s={23} $f='"Lato", "Open Sans", sans-serif' $heavy={.4} textLength="100" lengthAdjust="spacingAndGlyphs">provedal</BrandText>
                </Brand>
                <Brand $ml={37} $mt={32} width="140" height="40" viewBox="0 0 140 40">
                    <BrandText x="0" y="25" $s={23} $w={700} $f='"DejaVu Sans", sans-serif' textLength="140" lengthAdjust="spacingAndGlyphs">SCHÜCO</BrandText>
                </Brand>
                <Brand $ml={36} $mt={29} width="141" height="40" viewBox="0 0 141 40">
                    <BrandText x="0" y="25" $s={25} $f='"Liberation Sans", sans-serif' $heavy={.5} textLength="141" lengthAdjust="spacingAndGlyphs">SLIDORS</BrandText>
                </Brand>
                <Brand $ml={34} $mt={28} width="143" height="40" viewBox="0 0 143 40">
                    <BrandText x="0" y="25" $s={27} $i $f='"Liberation Serif", serif' textLength="135" lengthAdjust="spacingAndGlyphs">D<tspan fontSize="20">OOR</tspan>H<tspan fontSize="20">AN</tspan></BrandText>
                    <circle cx="140" cy="8" r="2.4" fill="#a8a8a8" />
                </Brand>
            </Brands>
            <Footer>
                <FooterHouse />
                <FooterBody>
                    <FooterCol $w={373}>
                        <Logo dark w={240} />
                        <FooterAbout>
                            Мы работаем с 2001 года, у нас огромный опыт профессионального монтажа продукции заслуженных брендов с положительной репутацией. Производим индивидуальный расчет для каждого заказчика.
                        </FooterAbout>
                        <FooterSocial>
                            <FaVk size={19} />
                            <FaInstagram size={18} />
                        </FooterSocial>
                    </FooterCol>
                    <FooterCol $w={175}>
                        <FooterTitle>Услуги</FooterTitle>
                        <FooterLinks>{services.map(s => <FooterLink key={s}>{s}</FooterLink>)}</FooterLinks>
                    </FooterCol>
                    <FooterCol $w={257}>
                        <FooterTitle>Компания</FooterTitle>
                        <FooterLinks>{company.map(s => <FooterLink key={s}>{s}</FooterLink>)}</FooterLinks>
                    </FooterCol>
                    <FooterCol $w={240}>
                        <FooterTitle>Контакты</FooterTitle>
                        <FooterLinks>
                            <FooterLink><b>Адрес:</b> г. Гатчина, ул. Урицкого, д. 6</FooterLink>
                            <FooterLink $ls={-0.15}><b>Телефон:</b> +7 (930) 003-08-01, +7 (800) 954-43-54</FooterLink>
                            <FooterLink $ls={-0.1}><b>E-mail:</b> info@windowsystem.ru</FooterLink>
                        </FooterLinks>
                        <HoursHint>Режим работы</HoursHint>
                        <Hours>Пн-Пт: 10:00 - 18:00<br />Сб: 10:00 - 17:00</Hours>
                    </FooterCol>
                </FooterBody>
                <FooterBottom>
                    <div>Политика конфиденциальности<i>|</i>Политика cookie</div>
                    <div>© 2020 Windowsystem. Все права защищены.</div>
                </FooterBottom>
            </Footer>
        </Page>
    );
}
